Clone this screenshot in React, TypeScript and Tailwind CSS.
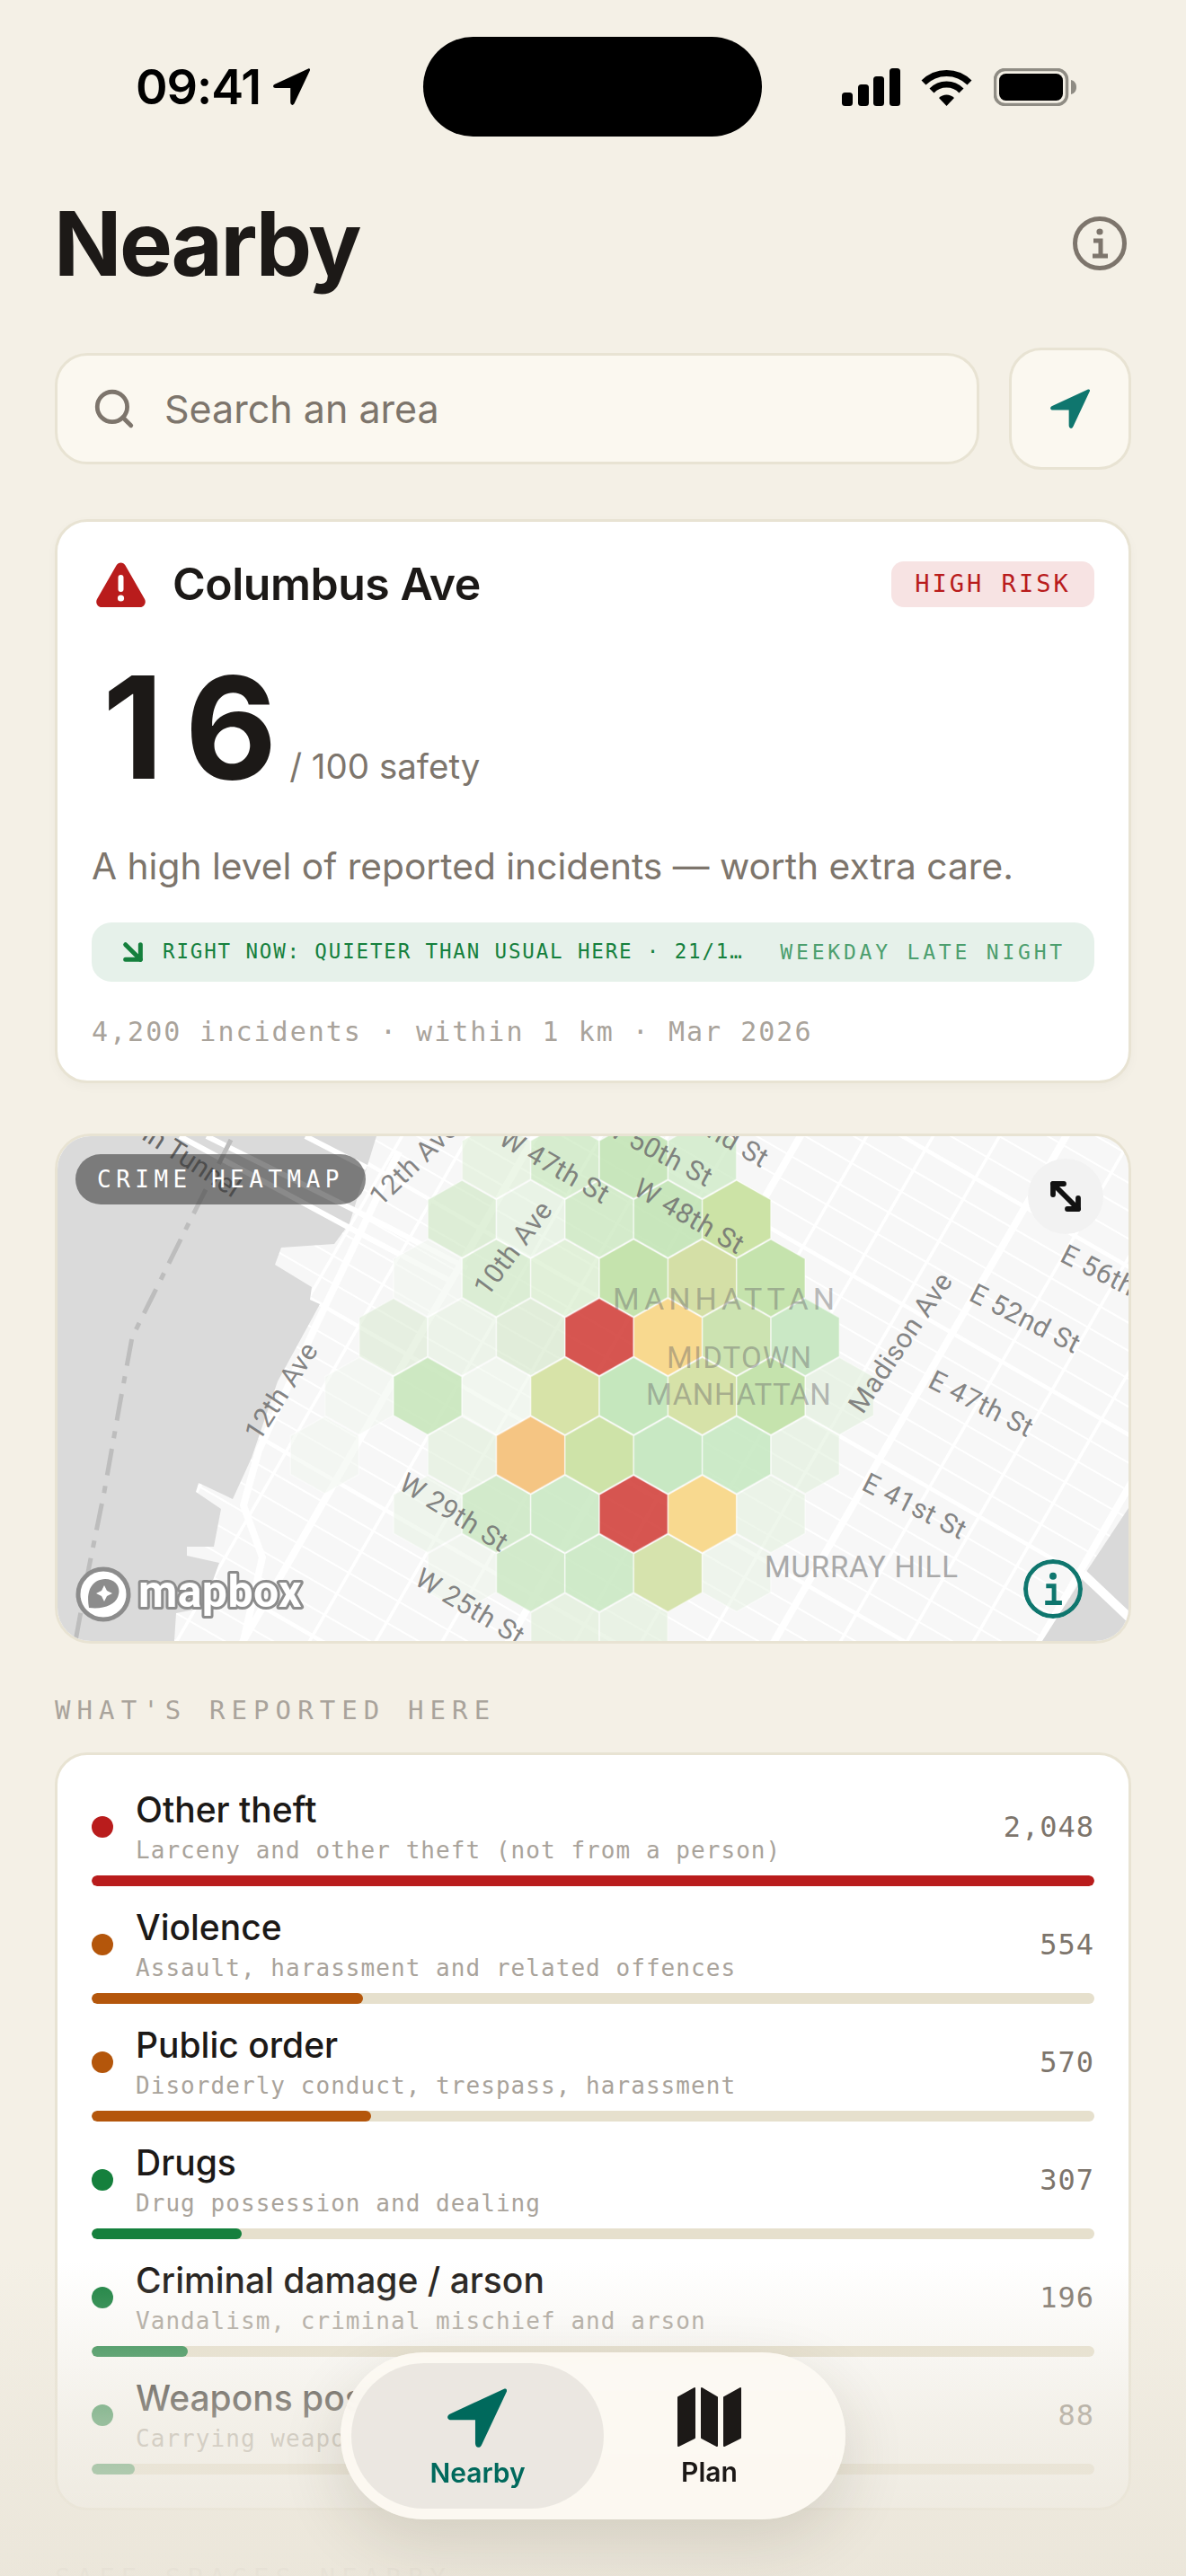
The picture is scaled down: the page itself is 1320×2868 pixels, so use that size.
import { ArrowDownRight, MoveDiagonal2, Search } from 'lucide-react';

const mono = "font-['DejaVu_Sans_Mono',monospace]";

const rows = [
  { name: 'Other theft', sub: 'Larceny and other theft (not from a person)', count: '2,048', color: 'bg-[#b91c1c]', width: 1116 },
  { name: 'Violence', sub: 'Assault, harassment and related offences', count: '554', color: 'bg-[#b4560b]', width: 302 },
  { name: 'Public order', sub: 'Disorderly conduct, trespass, harassment', count: '570', color: 'bg-[#b4560b]', width: 311 },
  { name: 'Drugs', sub: 'Drug possession and dealing', count: '307', color: 'bg-[#15803d]', width: 167 },
  { name: 'Criminal damage / arson', sub: 'Vandalism, criminal mischief and arson', count: '196', color: 'bg-[#15803d]', width: 107 },
  { name: 'Weapons possession', sub: 'Carrying weapons in public', count: '88', color: 'bg-[#15803d]', width: 48 },
];

// k = row from the top red cell, q = half-column from it
const hexes: [number, number, string, number][] = [
  [-3, -3, '#dcefd4', 0.55], [-3, -1, '#c4e6b8', 0.65], [-3, 1, '#bfe3b2', 0.85], [-3, 3, '#c9e8c0', 0.7],
  [-2, -4, '#cfe8c4', 0.65], [-2, -2, '#dff0d8', 0.55], [-2, 0, '#c4e6b8', 0.7], [-2, 2, '#bfe3b2', 0.85], [-2, 4, '#c6e09c', 0.9],
  [-1, -5, '#eef5ea', 0.45], [-1, -3, '#cfe8c4', 0.7], [-1, -1, '#d5ecca', 0.65], [-1, 1, '#bfe0a4', 0.9], [-1, 3, '#cfdc9c', 0.9], [-1, 5, '#bfe0a4', 0.9],
  [0, -6, '#d9ead0', 0.55], [0, -4, '#e4f0de', 0.55], [0, -2, '#d5e8cb', 0.65], [0, 0, '#d23f39', 0.88], [0, 2, '#f8d789', 0.95], [0, 4, '#c7e0a8', 0.9], [0, 6, '#c4e6bf', 0.9],
  [1, -7, '#eef4ea', 0.45], [1, -5, '#c6e5b9', 0.85], [1, -3, '#e9f3e4', 0.45], [1, -1, '#d3e09f', 0.9], [1, 1, '#bfe4b6', 0.9], [1, 3, '#d2df9f', 0.9], [1, 5, '#bfe0a4', 0.9], [1, 7, '#dfeeda', 0.6],
  [2, -8, '#eef4ea', 0.45], [2, -4, '#dfeed8', 0.6], [2, -2, '#f4c27c', 0.95], [2, 0, '#c9e09f', 0.9], [2, 2, '#c2e6bc', 0.9], [2, 4, '#c4e7bf', 0.85], [2, 6, '#dfeed9', 0.55],
  [3, -5, '#e8f2e3', 0.55], [3, -3, '#cbe8c3', 0.85], [3, -1, '#c8e8c1', 0.85], [3, 1, '#d23f39', 0.88], [3, 3, '#f8d789', 0.95], [3, 5, '#e3f0dd', 0.6],
  [4, -4, '#edf4e9', 0.55], [4, -2, '#cbe8c3', 0.85], [4, 0, '#c8e8c1', 0.85], [4, 2, '#d1e0a4', 0.9], [4, 4, '#e8f3e4', 0.55],
  [5, -1, '#dfeed9', 0.7], [5, 1, '#dfeed9', 0.6],
];

function hexPoints(k: number, q: number) {
  const cx = 667 + 38.2 * q;
  const cy = 1488.6 + 65.7 * k;
  const w = 38;
  const h = 43;
  return [
    [cx, cy - h],
    [cx + w, cy - h / 2],
    [cx + w, cy + h / 2],
    [cx, cy + h],
    [cx - w, cy + h / 2],
    [cx - w, cy - h / 2],
  ]
    .map((p) => p.join(','))
    .join(' ');
}

const labels: [string, number, number, number][] = [
  ['12th Ave', 315, 1550, -57],
  ['12th Ave', 462, 1296, -44],
  ['10th Ave', 573, 1391, -53],
  ['W 47th St', 616, 1300, 30],
  ['W 50th St', 730, 1283, 28],
  ['W 52nd St', 790, 1258, 30],
  ['W 48th St', 766, 1356, 30],
  ['W 29th St', 504, 1686, 32],
  ['W 25th St', 522, 1791, 31],
  ['Madison Ave', 1004, 1496, -56],
  ['E 52nd St', 1140, 1470, 27],
  ['E 47th St', 1091, 1565, 27],
  ['E 41st St', 1017, 1679, 27],
  ['E 56th St', 1238, 1425, 27],
];

function NavArrow({ className }: { className: string }) {
  return (
    <svg viewBox="0 0 65 65" className={className} fill="currentColor">
      <path d="M62 .8 3 28c-4.500 2.200-3.500 6.800 1.500 6.800H30.500V60c0 5.500 5 6.500 7 2L65 3.500C65.800 1.500 64 0 62 .8Z" />
    </svg>
  );
}

function InfoGlyph({ className, width = 5 }: { className: string; width?: number }) {
  return (
    <svg viewBox="0 0 60 60" className={className} fill="none" stroke="currentColor" strokeWidth={width}>
      <circle cx="30" cy="30" r={30 - width / 2} />
      <circle cx="30" cy="17" r="3.6" fill="currentColor" stroke="none" />
      <path d="M23 27h8v17M22 44h17" strokeWidth={width} />
    </svg>
  );
}

function HeatMap() {
  const avenues = Array.from({ length: 30 }, (_, i) => i - 15);
  const cross = Array.from({ length: 90 }, (_, i) => i - 45);
  return (
    <svg viewBox="64 1265 1192 562" className="block h-[562px] w-[1192px]">
      <rect x="64" y="1265" width="1192" height="562" fill="#f7f7f7" />
      {cross.map((i) => {
        const ox = 933 + -0.5 * i * 27;
        const oy = 1598 + 0.866 * i * 27;
        return (
          <line key={i} x1={ox - 1400 * 0.866} y1={oy - 1400 * 0.5} x2={ox + 1400 * 0.866} y2={oy + 1400 * 0.5} stroke="#fff" strokeWidth={i % 6 === 0 ? 4.5 : 2} />
        );
      })}
      {avenues.map((i) => {
        const ox = 1068 + 0.866 * i * 64;
        const oy = 1470 + 0.5 * i * 64;
        return (
          <line key={i} x1={ox - 1000 * 0.5} y1={oy + 1000 * 0.866} x2={ox + 1000 * 0.5} y2={oy - 1000 * 0.866} stroke="#fff" strokeWidth={i % 4 === 0 ? 8 : 3.5} />
        );
      })}
      <path d="M64 1265H419L389 1362 372 1385 313 1389 306 1408 347 1433 345 1447 356 1452 309 1538 280 1623 259 1669 221 1651 218 1661 246 1680 238 1722 208 1722 208 1732 244 1740 226 1790 196 1796 194 1827H64Z" fill="#dadada" />
      <path d="M1258 1676 1207 1753 1160 1827H1258Z" fill="#d9d9d9" />
      <path d="M1205 1752 1258 1802" stroke="#fff" strokeWidth="10" />
      <path d="M200 1265 402 1374 503 1427M230 1265 430 1365 520 1412M340 1265 408 1300" stroke="#fff" strokeWidth="6" fill="none" />
      <path d="M444 1282 351 1477 288 1615 271 1676 292 1734 271 1827" stroke="#fff" strokeWidth="8" fill="none" />
      <path d="M257 1269 210 1362 147 1489 133 1565 116 1661 99 1745 84 1827" stroke="#bdbdbd" strokeWidth="5" strokeDasharray="30 12 8 12" fill="none" />
      {hexes.map(([k, q, fill, opacity]) => (
        <polygon key={`${k}${q}`} points={hexPoints(k, q)} fill={fill} fillOpacity={opacity} stroke="#ffffff" strokeOpacity="0.45" strokeWidth="1.5" />
      ))}
      {labels.map(([text, x, y, angle]) => (
        <text key={text + x} transform={`translate(${x} ${y}) rotate(${angle})`} textAnchor="middle" dominantBaseline="middle" fontFamily="Roboto, sans-serif" fontSize="30.5" letterSpacing="0.5" fill="#6f6f6f" fillOpacity="0.85">
          {text}
        </text>
      ))}
      <text transform="translate(259 1334) rotate(33)" textAnchor="end" fontFamily="Roboto, sans-serif" fontSize="30.5" fill="#666">
        Lincoln Tunnel
      </text>
      <text x="682" y="1458" fontFamily="Roboto, sans-serif" fontSize="34" letterSpacing="5" fill="#6b6b6b" fillOpacity="0.45">MANHATTAN</text>
      <text x="742" y="1523" fontFamily="Roboto, sans-serif" fontSize="33" letterSpacing="1.2" fill="#6b6b6b" fillOpacity="0.45">MIDTOWN</text>
      <text x="719" y="1564" fontFamily="Roboto, sans-serif" fontSize="33" letterSpacing="0.6" fill="#6b6b6b" fillOpacity="0.45">MANHATTAN</text>
      <text x="851" y="1756" fontFamily="Roboto, sans-serif" fontSize="33" letterSpacing="0.8" fill="#a9a9a9">MURRAY HILL</text>
      <circle cx="115" cy="1775" r="28" fill="#fff" stroke="#8c8c8c" strokeWidth="5" />
      <path d="M99 1790c-3-16 1-31 18-32 12 0 17 9 15 17-2 11-15 17-33 15Z" fill="#8c8c8c" />
      <path d="M116 1765l3 6 6 3-6 3-3 6-3-6-6-3 6-3Z" fill="#fff" />
      <text x="154" y="1789" fontFamily="Roboto, sans-serif" fontWeight="700" fontSize="50" letterSpacing="0.4" fill="#fff" stroke="#8c8c8c" strokeWidth="6" strokeLinejoin="round" paintOrder="stroke">
        mapbox
      </text>
    </svg>
  );
}

export default function App() {
  return (
    <div className="relative h-[2868px] w-[1320px] overflow-hidden bg-[#f4f0e6] font-['Inter',sans-serif] text-[#1c1917]">
      {/* Status bar */}
      <div className="flex h-[152px] items-center pt-[41px]">
        <div className="flex w-[471px] items-center gap-[14px] pl-[151px]">
          <span className="text-[54px] leading-none font-semibold tracking-[-0.02em] text-black">09:41</span>
          <NavArrow className="h-[41px] w-[41px] text-black" />
        </div>
        <div className="h-[111px] w-[377px] rounded-full bg-black" />
        <div className="flex flex-1 items-center pl-[89px]">
          <svg viewBox="0 0 65 42" className="h-[42px] w-[65px]" fill="#000">
            <rect x="0" y="27" width="12" height="15" rx="3.5" />
            <rect x="18" y="18" width="12" height="24" rx="3.5" />
            <rect x="35" y="9" width="12" height="33" rx="3.5" />
            <rect x="53" y="0" width="12" height="42" rx="3.5" />
          </svg>
          <svg viewBox="0 0 57 42" className="ml-[23px] h-[42px] w-[57px]" fill="none" stroke="#000">
            <path d="M3 16A36 36 0 0 1 54 16" strokeWidth="7" />
            <path d="M12 25A23 23 0 0 1 45 25" strokeWidth="7" />
            <path d="M28.5 42 20 33A12 12 0 0 1 37 33Z" fill="#000" stroke="none" />
          </svg>
          <svg viewBox="0 0 92 42" className="ml-[24px] h-[42px] w-[92px]">
            <rect x="1.5" y="1.5" width="80" height="39" rx="11" fill="none" stroke="#8f8c84" strokeWidth="3.5" />
            <rect x="6" y="6" width="71" height="30" rx="7.5" fill="#000" />
            <path d="M86 13c4 1 6 4 6 8s-2 7-6 8Z" fill="#8f8c84" />
          </svg>
        </div>
      </div>

      <div className="px-[61px]">
        {/* Title */}
        <div className="mt-[59px] flex items-center justify-between pr-[5px]">
          <h1 className="-ml-[1px] text-[99px] leading-[120px] font-bold tracking-[-0.025em] text-[#1c1917]">Nearby</h1>
          <InfoGlyph className="h-[60px] w-[60px] text-[#7d756c]" />
        </div>

        {/* Search */}
        <div className="mt-[56px] flex items-center gap-[33px]">
          <div className="flex h-[124px] flex-1 items-center rounded-[36px] border-[3px] border-[#e8e3d3] bg-[#fbf8f0] pl-[38px]">
            <Search size={50} strokeWidth={2.3} className="text-[#7d756c]" />
            <span className="ml-[31px] text-[43px] text-[#7d756c]">Search an area</span>
          </div>
          <div className="flex h-[136px] w-[136px] items-center justify-center rounded-[36px] border-[3px] border-[#e8e3d3] bg-[#fbf8f0]">
            <NavArrow className="h-[44px] w-[44px] text-[#0f766e]" />
          </div>
        </div>

        {/* Score card */}
        <div className="mt-[55px] rounded-[36px] border-[3px] border-[#e8e3d3] bg-white px-[38px] pt-[44px] pb-[34px] shadow-[0_4px_12px_rgba(0,0,0,0.03)]">
          <div className="flex h-[51px] items-center">
            <svg viewBox="0 0 57 51" className="ml-[4px] h-[51px] w-[57px]">
              <path d="M23.5 4.5c2.2-4 7.8-4 10 0l21.5 37.5c2.2 4-.6 9-5 9H7c-4.400 0-7.200-5-5-9Z" fill="#b91c1c" />
              <rect x="25.500" y="15" width="6" height="19" rx="3" fill="#fff" />
              <circle cx="28.500" cy="41" r="3.600" fill="#fff" />
            </svg>
            <span className="ml-[29px] flex-1 text-[50px] font-semibold tracking-[-0.01em]">Columbus Ave</span>
            <span className={`${mono} flex h-[51px] w-[226px] items-center justify-center rounded-[14px] bg-[#f7e3e3] text-[27px] tracking-[3px] text-[#b91c1c]`}>HIGH RISK</span>
          </div>
          <div className="mt-[55px] flex items-baseline pl-[12px]">
            <span className="text-[158px] leading-[158px] font-bold tracking-[0.15em]">16</span>
            <span className="-ml-[10px] text-[38.5px] text-[#7d756c]">/ 100 safety</span>
          </div>
          <p className="mt-[48px] text-[40.7px] leading-[56px] text-[#7d756c]">A high level of reported incidents — worth extra care.</p>
          <div className="mt-[34px] flex h-[66px] items-center rounded-[22px] bg-[#e6f1ea] pr-[32px] pl-[28px]">
            <ArrowDownRight size={40} strokeWidth={3} className="-ml-[2px] shrink-0 text-[#15803d]" />
            <span className={`${mono} ml-[13px] flex-1 text-[22.5px] tracking-[1.85px] whitespace-nowrap text-[#15803d]`}>RIGHT NOW: QUIETER THAN USUAL HERE · 21/1…</span>
            <span className={`${mono} text-[23px] tracking-[3.8px] whitespace-nowrap text-[#4c9f6e]`}>WEEKDAY LATE NIGHT</span>
          </div>
          <p className={`${mono} mt-[36px] text-[30px] leading-[40px] tracking-[2px] text-[#a9a39b]`}>4,200 incidents · within 1 km · Mar 2026</p>
        </div>

        {/* Map */}
        <div className="relative mt-[56px] h-[568px] w-[1198px] overflow-hidden rounded-[40px] border-[3px] border-[#e8e3d3]">
          <HeatMap />
          <div className={`${mono} absolute top-[20px] left-[20px] flex h-[56px] w-[323px] items-center justify-center rounded-full bg-[#3c3c3c]/60 text-[26px] tracking-[5.5px] text-white`}>CRIME HEATMAP</div>
          <div className="absolute top-[25px] right-[28px] flex h-[84px] w-[84px] items-center justify-center rounded-full bg-[#f2f2f2]">
            <MoveDiagonal2 size={48} strokeWidth={2.9} className="text-[#111]" />
          </div>
          <InfoGlyph width={4.500} className="absolute right-[51px] bottom-[25px] h-[66px] w-[66px] rounded-full text-[#0f766e]" />
        </div>

        {/* Reported incidents */}
        <h2 className={`${mono} mt-[54px] text-[29px] leading-[40px] tracking-[7.1px] text-[#a9a39b]`}>WHAT&apos;S REPORTED HERE</h2>
        <div className="mt-[27px] flex flex-col gap-[21px] rounded-[36px] border-[3px] border-[#e8e3d3] bg-white px-[38px] pt-[36px] pb-[37px]">
          {rows.map((row) => (
            <div key={row.name}>
              <div className="flex items-center">
                <span className={`h-[24px] w-[24px] shrink-0 rounded-full ${row.color}`} />
                <div className="ml-[25px] flex-1">
                  <div className="text-[39px] leading-[50px] font-medium text-[#1c1917]">{row.name}</div>
                  <div className={`${mono} mt-[2px] text-[26px] leading-[36px] tracking-[1.05px] text-[#a9a39b]`}>{row.sub}</div>
                </div>
                <span className={`${mono} text-[32px] tracking-[1px] text-[#7d756c]`}>{row.count}</span>
              </div>
              <div className="mt-[10px] h-[12px] overflow-hidden rounded-full bg-[#e6e0cd]">
                <div className={`h-full rounded-full ${row.color}`} style={{ width: row.width }} />
              </div>
            </div>
          ))}
        </div>

        <h2 className={`${mono} mt-[55px] text-[29px] leading-[40px] tracking-[7.1px] text-[#a9a39b]`}>SAFE SPACES NEARBY</h2>
      </div>

      {/* Fade under the tab bar */}
      <div className="pointer-events-none absolute inset-x-0 bottom-0 h-[350px] bg-gradient-to-b from-[#ebe6da]/0 via-[#ebe6da]/60 via-50% to-[#ebe6da]/95" />

      {/* Tab bar */}
      <div className="absolute top-[2619px] left-[379px] flex h-[186px] w-[562px] rounded-full bg-[#fdfaf3]/90 p-[12px] shadow-[0_24px_70px_rgba(60,50,30,0.14)] backdrop-blur-md">
        <div className="flex h-[162px] w-[281px] flex-col items-center rounded-full bg-[#e9e6df]/90 pt-[28px]">
          <NavArrow className="-ml-[2px] h-[66px] w-[66px] text-[#00695c]" />
          <span className="mt-[10px] text-[30px] leading-[36px] font-semibold text-[#00695c]">Nearby</span>
        </div>
        <div className="flex flex-1 flex-col items-center pt-[27px] pr-[22px]">
          <svg viewBox="0 0 71 66" className="h-[66px] w-[71px]" fill="#1c1917" stroke="#1c1917" strokeWidth="2" strokeLinejoin="round">
            <path d="M1 11 19 1V56L1 65Z" />
            <path d="M27 1 44 11V65L27 56Z" />
            <path d="M52 11 70 1V56L52 65Z" />
          </svg>
          <span className="mt-[10px] text-[30px] leading-[36px] font-semibold text-[#1c1917]">Plan</span>
        </div>
      </div>
    </div>
  );
}
